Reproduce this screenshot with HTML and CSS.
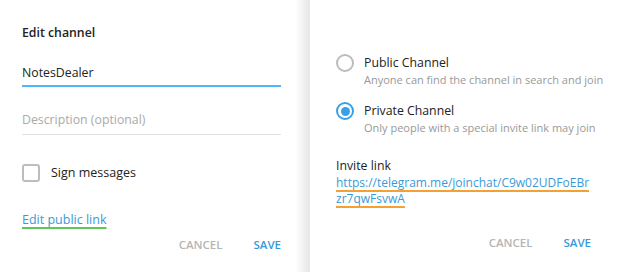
FILE: index.html
```html
<!DOCTYPE html>
<html lang="en">
<head>
  <meta charset="UTF-8" />
  <title>Edit channel</title>
  <link rel="stylesheet" href="styles.css">
</head>
<body>
  <div class="screens">
    <div class="panel panel-left">
      <h1 class="title">Edit channel</h1>
      <div class="field field-active">NotesDealer</div>
      <div class="field field-empty">Description (optional)</div>
      <label class="check">
        <span class="box"></span>
        <span>Sign messages</span>
      </label>
      <a class="edit-link" href="#">Edit public link</a>
      <div class="actions">
        <span class="btn btn-cancel">CANCEL</span>
        <span class="btn btn-save">SAVE</span>
      </div>
    </div>

    <div class="shade"></div>

    <div class="panel panel-right">
      <div class="option">
        <span class="radio"></span>
        <div>
          <div class="option-name">Public Channel</div>
          <div class="option-desc">Anyone can find the channel in search and join</div>
        </div>
      </div>
      <div class="option">
        <span class="radio radio-on"></span>
        <div>
          <div class="option-name">Private Channel</div>
          <div class="option-desc">Only people with a special invite link may join</div>
        </div>
      </div>
      <div class="invite">
        <div class="invite-label">Invite link</div>
        <a class="invite-url" href="#">https://telegram.me/joinchat/C9w02UDFoEBrzr7qwFsvwA</a>
      </div>
      <div class="actions">
        <span class="btn btn-cancel">CANCEL</span>
        <span class="btn btn-save">SAVE</span>
      </div>
    </div>
  </div>
</body>
</html>
```

FILE: styles.css
```css
body { margin: 0; background: #fff; font-family: "Open Sans", "DejaVu Sans", sans-serif; color: #222; }
.screens { display: flex; height: 272px; width: 620px; overflow: hidden; }

.panel { box-sizing: border-box; display: flex; flex-direction: column; }
.panel-left { width: 295px; padding: 24px 14px 0 22px; }
.panel-right { flex: 1; padding: 54px 29px 0 26px; }
.shade { width: 15px; background: linear-gradient(to right, #fff, #e6e6e6); }

.title { margin: 0; font-size: 12.3px; font-weight: 600; line-height: 18px; color: #222; }

.field { font-size: 12.3px; line-height: 18px; }
.field-active { margin-top: 22px; padding-bottom: 3px; border-bottom: 2px solid #4db8f5; color: #222; }
.field-empty { margin-top: 24px; padding-bottom: 5px; border-bottom: 1px solid #e0e0e0; color: #aaa; }

.check { display: flex; align-items: center; margin-top: 29px; font-size: 12.5px; line-height: 18px; }
.box { width: 14px; height: 14px; border: 2px solid #bdbdbd; border-radius: 3px; margin-right: 11px; }

.edit-link {
  align-self: flex-start; margin-top: 29px; font-size: 12.5px; line-height: 18px;
  color: #3a9ad8; text-decoration: underline; text-decoration-color: #5cc85a;
  text-decoration-thickness: 2px; text-underline-offset: 3px;
}

.actions { display: flex; justify-content: flex-end; gap: 31px; margin-top: 8px; }
.panel-right .actions { margin-top: 27px; }
.btn { font-size: 11.5px; font-weight: 600; line-height: 16px; }
.btn-cancel { color: #b5b5b5; }
.btn-save { color: #3a9ad8; }

.option { display: flex; margin-right: -20px; }
.option + .option { margin-top: 14px; }
.radio { width: 14px; height: 14px; border: 2px solid #bcbcbc; border-radius: 50%; margin: 0 10px 0 0; flex: none; position: relative; }
.radio-on { border-color: #3aa0e6; }
.radio-on::after {
  content: ""; position: absolute; left: 2.5px; top: 2.5px; width: 9px; height: 9px;
  border-radius: 50%; background: #3aa0e6;
}
.option-name { font-size: 12.3px; line-height: 18px; color: #222; }
.option-desc { font-size: 11px; line-height: 16px; color: #999; white-space: nowrap; }

.invite { margin-top: 22px; margin-right: -3px; font-size: 12.3px; line-height: 16.5px; }
.invite-label { color: #222; }
.invite-url {
  font-size: 12px; color: #3a9ad8; word-break: break-all; text-decoration: underline; text-decoration-color: #f5a033;
  text-decoration-thickness: 2px; text-underline-offset: 3px;
}
```
